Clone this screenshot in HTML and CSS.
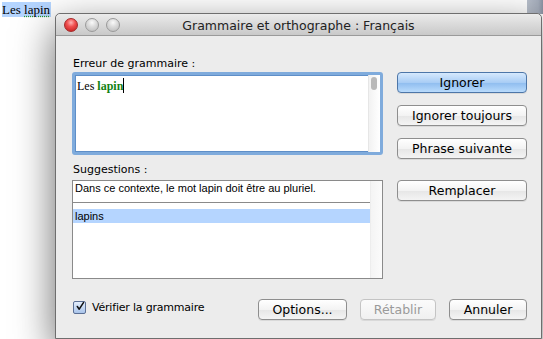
FILE: index.html
```html
<!DOCTYPE html>
<html lang="fr">
<head>
<meta charset="utf-8">
<title>Grammaire et orthographe</title>
<link rel="stylesheet" href="styles.css">
</head>
<body>
<div class="doc"><span class="sel">Les <span class="gram">lapin</span></span></div>
<div class="bg-scroll"></div>
<div class="window">
  <div class="titlebar">
    <div class="lights">
      <span class="light red"></span>
      <span class="light"></span>
      <span class="light"></span>
    </div>
    <div class="title">Grammaire et orthographe : Français</div>
  </div>
  <div class="content">
    <div class="grid">
      <div class="label">Erreur de grammaire :</div>
      <div class="errbox">
        <div class="errtext">Les <b class="green">lapin</b><span class="caret"></span></div>
        <div class="vscroll"><span class="thumb"></span></div>
      </div>
      <div class="btns">
        <button class="btn default">Ignorer</button>
        <button class="btn">Ignorer toujours</button>
        <button class="btn">Phrase suivante</button>
      </div>
      <div class="label">Suggestions :</div>
      <div class="listbox">
        <div class="list">
          <div class="msg">Dans ce contexte, le mot lapin doit être au pluriel.</div>
          <div class="row selected">lapins</div>
        </div>
        <div class="track"></div>
      </div>
      <div class="btns">
        <button class="btn">Remplacer</button>
      </div>
    </div>
    <div class="footer">
      <label class="check"><span class="box"><svg viewBox="0 0 13 13" width="13" height="13"><path d="M3 6.5 L5.5 10 L11 1.5" fill="none" stroke="#111" stroke-width="2" stroke-linecap="round" stroke-linejoin="round"/></svg></span>Vérifier la grammaire</label>
      <div class="fbtns">
        <button class="btn w-options">Options...</button>
        <button class="btn disabled w-retab">Rétablir</button>
        <button class="btn w-annuler">Annuler</button>
      </div>
    </div>
  </div>
</div>
</body>
</html>
```

FILE: styles.css
```css
html, body {
  margin: 0;
  padding: 0;
  background: #fff;
  width: 543px;
  height: 339px;
  overflow: hidden;
  position: relative;
}
.doc {
  padding: 2px 0 0 2px;
  font-family: "Liberation Serif", "DejaVu Serif", serif;
  font-size: 13px;
  line-height: 15px;
  color: #000;
}
.sel { background: #b5d5ff; padding-right: 1px; }
.gram {
  text-decoration: underline dotted #2a9a2a;
  text-underline-offset: 2px;
}
.bg-scroll {
  position: absolute;
  left: 527px;
  top: 0;
  width: 16px;
  height: 14px;
  background: linear-gradient(90deg, #b9c0cc 0, #a5adbb 70%, #8a92a2 100%);
}
.window {
  position: absolute;
  left: 55px;
  top: 13px;
  width: 485px;
  height: 324px;
  border: 1px solid #6e6e6e;
  border-radius: 5px 5px 0 0;
  background: #ececec;
  box-shadow: 0 14px 40px rgba(0, 0, 0, 0.6);
  font-family: "DejaVu Sans", "Liberation Sans", sans-serif;
  color: #000;
}
.titlebar {
  height: 21px;
  border-bottom: 1px solid #9a9a9a;
  border-radius: 5px 5px 0 0;
  background: linear-gradient(#ebebeb, #d6d6d6 60%, #c9c9c9);
  display: flex;
  align-items: center;
  position: relative;
}
.lights {
  display: flex;
  gap: 7px;
  padding-left: 8px;
  position: absolute;
  left: 0;
  top: 4px;
}
.light {
  width: 12px;
  height: 12px;
  border-radius: 50%;
  border: 1px solid #9a9a9a;
  background: radial-gradient(circle at 50% 30%, #fafafa 0, #dcdcdc 40%, #b8b8b8 100%);
}
.light.red {
  border-color: #a52a2a;
  background: radial-gradient(circle at 50% 30%, #ffb5b5 0, #f05050 40%, #c01818 100%);
}
.title {
  flex: 1;
  text-align: center;
  font-size: 12.5px;
  color: #222;
  padding-top: 1px;
}
.content {
  padding: 0 14px 0 16px;
}
.grid {
  display: grid;
  grid-template-columns: 311px 130px;
  column-gap: 14px;
  padding-top: 21px;
}
.label {
  grid-column: 1 / span 2;
  font-size: 11px;
  line-height: 14px;
  height: 15px;
  padding-left: 1px;
}
.errbox {
  height: 83px;
  box-sizing: border-box;
  border: 3px solid #7fabdc;
  border-radius: 3px;
  background: #fff;
  display: flex;
  margin-bottom: 8px;
  box-shadow: inset 0 0 0 1px #5f8fc8;
}
.errtext {
  flex: 1;
  padding: 3px 2px;
  font-family: "Liberation Serif", "DejaVu Serif", serif;
  font-size: 12px;
  line-height: 15px;
}
.green { color: #138213; }
.caret {
  display: inline-block;
  width: 1px;
  height: 15px;
  background: #000;
  vertical-align: -3px;
}
.vscroll {
  width: 11px;
  background: linear-gradient(90deg, #f2f2f2, #ffffff);
  border-left: 1px solid #e6e6e6;
  position: relative;
}
.thumb {
  position: absolute;
  left: 2px;
  top: 2px;
  width: 6px;
  height: 13px;
  border-radius: 3px;
  background: #b9b9b9;
}
.btns {
  display: flex;
  flex-direction: column;
  gap: 12px;
}
.listbox + .btns { margin-top: 2px; }
.btn {
  height: 21px;
  box-sizing: border-box;
  border: 1px solid #8e8e8e;
  border-radius: 4px;
  background: linear-gradient(#ffffff, #f3f3f3 50%, #e6e6e6 51%, #f4f4f4);
  font-family: "DejaVu Sans", "Liberation Sans", sans-serif;
  font-size: 12.5px;
  color: #000;
  padding: 0;
  line-height: 18px;
  box-shadow: 0 1px 0 rgba(0,0,0,0.08);
}
.btn.default {
  border-color: #4d76a8;
  background: linear-gradient(#d6e9fd, #a9cdf5 50%, #8ebcef 51%, #b9dbfc);
}
.btn.disabled {
  color: #9a9a9a;
  border-color: #c4c4c4;
  background: linear-gradient(#fbfbfb, #f0f0f0);
}
.listbox {
  height: 99px;
  margin-top: 2px;
  box-sizing: border-box;
  border: 1px solid #8a8a8a;
  background: #fff;
  display: flex;
}
.list { flex: 1; }
.msg {
  font-family: "Liberation Sans", "DejaVu Sans", sans-serif;
  font-size: 11px;
  line-height: 13px;
  padding: 1px 2px 7px 2px;
  border-bottom: 1px solid #8a8a8a;
  margin-bottom: 6px;
}
.row {
  font-family: "Liberation Sans", "DejaVu Sans", sans-serif;
  font-size: 11px;
  line-height: 14px;
  padding: 0 2px;
}
.row.selected { background: #b5d5ff; }
.track {
  width: 11px;
  background: linear-gradient(90deg, #f4f4f4, #fbfbfb);
  border-left: 1px solid #ededed;
}
.footer {
  display: flex;
  align-items: flex-start;
  justify-content: space-between;
  margin-top: 20px;
}
.check {
  display: flex;
  align-items: center;
  gap: 6px;
  font-size: 11px;
  letter-spacing: -0.2px;
  padding-left: 1px;
  margin-top: 2px;
}
.box {
  width: 13px;
  height: 13px;
  box-sizing: border-box;
  border: 1px solid #5b6f94;
  border-radius: 2px;
  background: linear-gradient(#e4eefc, #a9c4ea);
  display: flex;
  align-items: center;
  justify-content: center;
}
.box svg { display: block; margin-top: -2px; margin-left: 1px; }
.fbtns {
  display: flex;
  gap: 13px;
}
.w-options { width: 89px; }
.w-retab { width: 76px; }
.w-annuler { width: 78px; }
.btns .btn { width: 130px; }
```
